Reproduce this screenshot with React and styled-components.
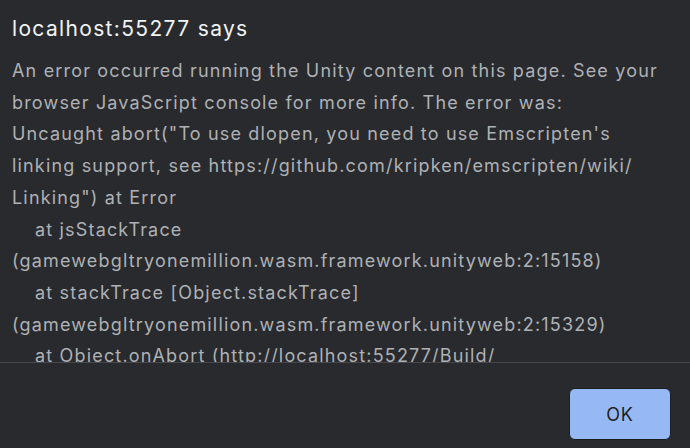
import React from "react";
import styled, { createGlobalStyle } from "styled-components";

const Global = createGlobalStyle`
  html, body { margin: 0; padding: 0; background: #292a2d; }
  body { font-family: Inter, "Noto Sans", "Liberation Sans", sans-serif; }
`;

const Dialog = styled.div`
  width: 690px;
  height: 448px;
  background: #292a2d;
  display: flex;
  flex-direction: column;
  overflow: hidden;
`;

const Header = styled.div`
  padding: 16px 12px 0 12px;
`;

const Title = styled.h1`
  margin: 0;
  font-size: 21px;
  line-height: 25px;
  letter-spacing: 0.064em;
  font-weight: 400;
  color: #f1f3f4;
`;

const Message = styled.div`
  margin-top: 14px;
  height: 307px;
  overflow: hidden;
  padding: 0 12px;
`;

const Line = styled.div`
  font-size: 18px;
  line-height: 31.7px;
  letter-spacing: 0.065em;
  color: #aeb1b5;
  white-space: nowrap;
  padding-left: ${(p) => (p.$indent ? "23px" : "0")};
`;

const Footer = styled.div`
  border-top: 1px solid #47484c;
  flex: 1;
  display: flex;
  justify-content: flex-end;
  align-items: flex-start;
  padding: 25px 19px 0 0;
`;

const Button = styled.button`
  width: 102px;
  height: 52px;
  border-radius: 6px;
  border: 1px solid #1c1d20;
  background: #96b8f4;
  color: #1f1f1f;
  font-family: Inter, "Noto Sans", "Liberation Sans", sans-serif;
  font-size: 18px;
  letter-spacing: 0.05em;
  padding: 0;
`;

const lines = [
  ["An error occurred running the Unity content on this page. See your"],
  ["browser JavaScript console for more info. The error was:"],
  ["Uncaught abort(\"To use dlopen, you need to use Emscripten's"],
  ["linking support, see https://github.com/kripken/emscripten/wiki/"],
  ["Linking\") at Error"],
  ["at jsStackTrace", true],
  ["(gamewebgltryonemillion.wasm.framework.unityweb:2:15158)"],
  ["at stackTrace [Object.stackTrace]", true],
  ["(gamewebgltryonemillion.wasm.framework.unityweb:2:15329)"],
  ["at Object.onAbort (http://localhost:55277/Build/", true],
];

export default function App() {
  return (
    <Dialog>
      <Global />
      <Header>
        <Title>localhost:55277 says</Title>
      </Header>
      <Message>
        {lines.map(([t, ind], i) => (
          <Line key={i} $indent={ind}>
            {t}
          </Line>
        ))}
      </Message>
      <Footer>
        <Button>OK</Button>
      </Footer>
    </Dialog>
  );
}
